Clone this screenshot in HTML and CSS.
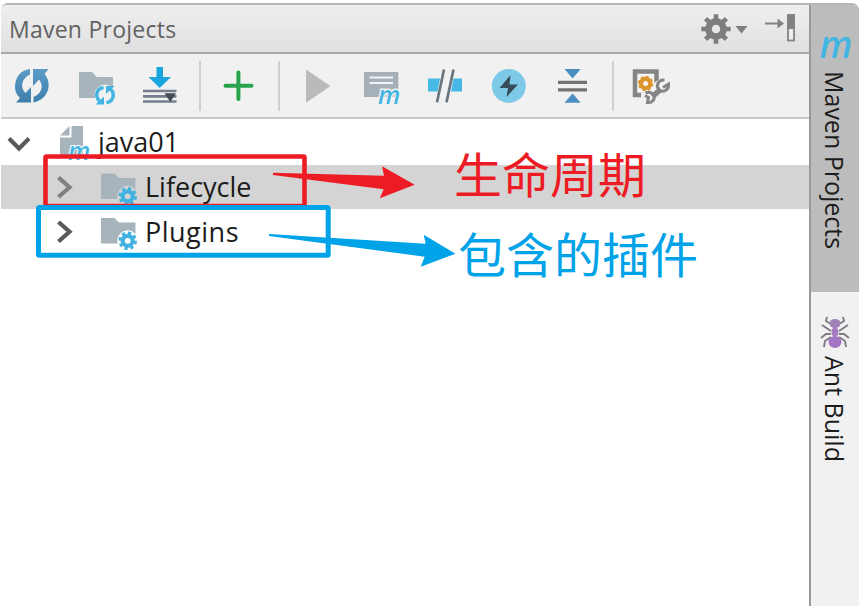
FILE: index.html
```html
<!DOCTYPE html>
<html lang="zh-CN">
<head>
<meta charset="utf-8">
<title>Maven Projects</title>
<link rel="stylesheet" href="styles.css">
</head>
<body>
<svg class="defs" width="0" height="0">
  <defs>
    <linearGradient id="steel" x1="0" y1="0" x2="0" y2="1"><stop offset="0" stop-color="#5b9bc6"/><stop offset="1" stop-color="#3f7fac"/></linearGradient>
    <g id="folder">
      <path d="M101 173.5H114.500L119 178H135.500V199H101Z" fill="#a8b4bc"/>
      <circle cx="127.700" cy="196.300" r="10.500" class="halo"/>
      <circle cx="127.700" cy="196.300" r="7.800" fill="none" stroke="#42b2e0" stroke-width="3" stroke-dasharray="3.300 2.826"/>
      <circle cx="127.700" cy="196.300" r="5" fill="none" stroke="#42b2e0" stroke-width="4.200"/>
    </g>
  </defs>
</svg>
<div class="window">
  <main class="panel">
    <header class="title-bar">
      <h1 class="title">Maven Projects</h1>
      <svg class="title-tools" viewBox="698 9 102 40" width="102" height="40">
        <circle cx="717" cy="29" r="7.500" fill="none" stroke="#7e7e7e" stroke-width="6.500"/>
        <path d="M717 14.300V19M717 39V43.700M702.300 29H707M727 29H731.700M706.600 18.600L710 22M724 36L727.400 39.400M727.400 18.600L724 22M710 36L706.600 39.400" stroke="#7e7e7e" stroke-width="4.600"/>
        <path d="M736.500 26H748.500L742.500 33.500Z" fill="#7e7e7e"/>
        <path d="M766 23.500H780" stroke="#828282" stroke-width="2"/>
        <path d="M778.500 18.500L785 23.500L778.500 28.500Z" fill="#828282"/>
        <rect x="789" y="15" width="6" height="25.500" fill="#efefef" stroke="#828282" stroke-width="1.800"/>
        <path d="M788.200 14.200H795.800V29H788.200Z" fill="#828282"/>
      </svg>
    </header>
    <div class="toolbar">
      <svg class="tool refresh" viewBox="12 66 40 40">
        <path d="M30 69C20 70 15 78 15 87C15 92 17 95 20 98L16 102.500H31V87L25.500 93C19.500 87 22 78 30 74.500Z" fill="url(#steel)"/>
        <path d="M33 69H48.500L44.500 74C52 82 50 99 33.500 102.500V97C42 94 44 85 39 79.500L33 86Z" fill="url(#steel)"/>
      </svg>
      <svg class="tool reimport" viewBox="78 66 40 40">
        <path d="M79 72H92L96.500 77H113V98H79Z" fill="#a8b4bc"/>
        <circle cx="105" cy="95" r="10.500" fill="#f1f1f1"/>
        <path d="M103.500 87.500C96.500 88.500 94.500 96 99.500 101M106.500 102.700C113.500 101.500 115.500 94 110.500 89" fill="none" stroke="#42b5e2" stroke-width="3.500"/>
        <path d="M95.500 104.500H104V96.500ZM106 86H114.500L106 94Z" fill="#42b5e2"/>
      </svg>
      <svg class="tool download" viewBox="140 66 40 40">
        <path d="M156.500 67H163V77H171L159.700 88L148.500 77H156.500Z" fill="#1ba5df"/>
        <path d="M143 91H176.500M143 96.300H176.500M143 101.500H176.500" stroke="#74818c" stroke-width="2.700"/>
        <path d="M164.500 93.200H176L170.300 102Z" fill="#444b51"/>
      </svg>
      <i class="divider after-download"></i>
      <svg class="tool add" viewBox="218 66 40 40"><path d="M238.400 72.500V99M225.500 85.700H251.500" stroke="#28a34b" stroke-width="4" stroke-linecap="round"/></svg>
      <i class="divider after-add"></i>
      <svg class="tool run" viewBox="298 66 40 40"><path d="M306 69.500L330.500 86L306 102.700Z" fill="#bababa"/></svg>
      <svg class="tool goal" viewBox="362 66 40 40">
        <path d="M364 72H398.300V97H364Z" fill="#a5b0b8"/>
        <path d="M369.500 77.500H393M369.500 83H393" stroke="#f4f4f4" stroke-width="2"/>
        <text x="378" y="104" class="m-mark toolbar-m">m</text>
      </svg>
      <svg class="tool offline" viewBox="425 66 40 40">
        <path d="M428 78.500H440L437.500 91.500H428ZM453.500 78.500H462V91.500H451Z" fill="#47b9e6"/>
        <path d="M444 69.500L437 102.300M453.500 69.500L446.500 102.300" stroke="#697681" stroke-width="2.700"/>
      </svg>
      <svg class="tool skip-tests" viewBox="489 66 40 40">
        <circle cx="508.800" cy="85.900" r="17" fill="#7dcae8"/>
        <path d="M510.500 75L499.500 88H508L506.500 97L518 84.500H509.500Z" fill="#354c5a"/>
      </svg>
      <svg class="tool collapse" viewBox="552 66 40 40">
        <path d="M564.500 69H580.700L572.600 78.500ZM564.500 102.700H580.700L572.600 93.500Z" fill="#4b8fc0"/>
        <path d="M558 82.300H587M558 89.800H587" stroke="#737373" stroke-width="3.200"/>
      </svg>
      <i class="divider after-collapse"></i>
      <svg class="tool settings" viewBox="631 66 40 40">
        <path d="M635 71.500H656.500V95H635Z" fill="#f5f5f5" stroke="#858585" stroke-width="4.500"/>
        <path d="M651 103L671 88L664 76L654 83L650 90L641 93V101Z" fill="#f1f1f1"/>
        <circle cx="645.600" cy="83.500" r="4.600" fill="none" stroke="#dc952d" stroke-width="4.200"/>
        <circle cx="645.600" cy="83.500" r="6.800" fill="none" stroke="#dc952d" stroke-width="1.800" stroke-dasharray="3 2.341"/>
        <path d="M652.500 96.500L660 90" stroke="#858585" stroke-width="5.500"/>
        <path d="M664.500 80C658 79.500 655.500 86 659 89.500C663 93.500 669 90 668.500 84L663 87.500M645 95.500L648.500 97.500L647.500 102.500C652.500 103 655.500 99 653.500 95.500C651.500 92 648 92 645.500 93" fill="none" stroke="#858585" stroke-width="3"/>
      </svg>
    </div>
    <div class="tree">
      <div class="row root">
        <svg class="row-icon" viewBox="1 119 96 46" width="96" height="46">
          <path d="M9 138.500L19 148.500L29 138.500" class="chevron"/>
          <path d="M71.500 126H83V156H60V137.500H71.500ZM69.500 126V135.500H60Z" fill="#a8b4bc"/>
          <text x="68" y="160" class="m-mark row-m">m</text>
        </svg>
        <span class="label">java01</span>
      </div>
      <div class="row selected">
        <svg class="row-icon" viewBox="1 165 143 44" width="143" height="44">
          <path d="M58.500 177.500L69.500 187.300L58.500 197" class="chevron muted"/><use href="#folder"/>
        </svg>
        <span class="label">Lifecycle</span>
      </div>
      <div class="row plugins">
        <svg class="row-icon" viewBox="1 164.500 143 44" width="143" height="44">
          <path d="M58.500 177.500L69.500 187.300L58.500 197" class="chevron"/><use href="#folder"/>
        </svg>
        <span class="label">Plugins</span>
      </div>
    </div>
  </main>
  <aside class="side-tabs">
    <div class="tab active">
      <svg class="tab-icon" viewBox="816 26 40 40" width="40" height="40"><text x="820.500" y="58" class="m-mark tab-m">m</text></svg>
      <span class="tab-label">Maven Projects</span>
    </div>
    <div class="tab">
      <svg class="tab-icon" viewBox="816 312 40 40" width="40" height="40">
        <path d="M832 324L827 321L828 317M840 324L845 321L844 317M832 331L823 325M840 331L849 325M832 334H827L822 338M840 334H845L850 338M832 337L826 341L825 347M840 337L846 341L847 347" fill="none" stroke="#807a82" stroke-width="1.900"/>
        <ellipse cx="836" cy="323.500" rx="5.500" ry="4.500" fill="#a080b5"/><ellipse cx="836" cy="332" rx="3.500" ry="5" fill="#a27cbc"/><ellipse cx="836" cy="342" rx="6.500" ry="6" fill="#a474c5"/>
      </svg>
      <span class="tab-label">Ant Build</span>
    </div>
  </aside>
</div>
<svg class="annotations" viewBox="0 0 859 606" width="859" height="606">
  <rect x="45.500" y="156.500" width="259" height="49.500" rx="1" fill="none" stroke="#ed1c24" stroke-width="4.600"/>
  <rect x="38.500" y="207.500" width="289.700" height="47.700" rx="1" fill="none" stroke="#00a2e8" stroke-width="5"/>
  <path d="M273 172.700L384 175.700L382 166.300L414.700 184.700L379.700 198.300L383.700 189.300L273 175Z" fill="#ed1c24"/>
  <path d="M269 234L425.700 243.700L423.700 234.700L455.500 253.700L420.700 266.700L424.700 256.700L269 236Z" fill="#00a2e8"/>
</svg>
<div class="note lifecycle-note">生命周期</div>
<div class="note plugins-note">包含的插件</div>
</body>
</html>
```
FILE: styles.css
```css
* { box-sizing: border-box; }
body {
  margin: 0;
  width: 859px;
  height: 606px;
  overflow: hidden;
  position: relative;
  background: #fff;
  color: #1c1c1c;
  font-family: "Open Sans", "Noto Sans", sans-serif;
}
svg { display: block; flex: none; overflow: visible; }
.defs { position: absolute; }
.window {
  display: flex;
  height: 603px;
  margin: 3px 0 0 1px;
  border-top: 2px solid #b5b5b5;
  border-radius: 7px 7px 0 0;
  overflow: hidden;
}
.panel { width: 808px; background: #fff; }
.title-bar {
  display: flex;
  align-items: center;
  justify-content: space-between;
  height: 49px;
  padding: 0 10px 0 8px;
  border-bottom: 2px solid #a8a8a8;
  background: linear-gradient(#efefef, #e0e0e0);
}
.title {
  margin: 0;
  font-size: 23px;
  font-weight: 400;
  line-height: 46px;
  letter-spacing: .25px;
  color: #626262;
}
.toolbar {
  display: flex;
  align-items: center;
  height: 65px;
  padding-left: 11px;
  border-bottom: 2px solid #c8c8c8;
  background: #f1f1f1;
}
.tool { width: 40px; height: 40px; }
.reimport { margin-left: 26px; }
.download { margin-left: 22px; }
.divider { width: 2px; height: 50px; background: #d0d0d0; flex: none; }
.after-download { margin-left: 19px; }
.add { margin-left: 17px; }
.after-add { margin-left: 20px; }
.run { margin-left: 18px; }
.goal, .skip-tests { margin-left: 24px; }
.offline, .collapse { margin-left: 23px; }
.after-collapse { margin-left: 20px; }
.settings { margin-left: 17px; }
.row { display: flex; height: 45px; --row-bg: #fff; }
.root { height: 46px; }
.selected { height: 44px; --row-bg: #d4d4d4; background: #d4d4d4; }
.label { padding-left: 1px; font-size: 27px; line-height: 43px; }
.root .label { line-height: 46px; }
.plugins .label { line-height: 45px; letter-spacing: .5px; }
.chevron { fill: none; stroke: #5a5a5a; stroke-width: 4.2px; }
.muted { stroke: #808080; }
.halo { fill: var(--row-bg); }
.m-mark {
  font-family: "Open Sans", sans-serif;
  font-style: italic;
  font-weight: 600;
  fill: #42b5e2;
}
.toolbar-m { font-size: 25px; stroke: #f1f1f1; stroke-width: 3px; paint-order: stroke; }
.row-m { font-size: 25px; stroke: #fff; stroke-width: 2px; paint-order: stroke; }
.tab-m { font-size: 37px; }
.side-tabs { width: 50px; background: #f1f1f1; border-left: 2px solid #999; }
.tab { display: flex; flex-direction: column; align-items: center; padding-top: 20px; }
.active { height: 287px; padding-top: 21px; background: #bcbcbc; }
.tab-label {
  writing-mode: vertical-rl;
  font-size: 25px;
  line-height: 36px;
  margin-top: 4px;
  white-space: nowrap;
}
.active .tab-label { margin-top: 5px; }
.annotations { position: absolute; left: 0; top: 0; }
.note {
  position: absolute;
  font-family: "Noto Sans CJK SC", sans-serif;
  font-size: 48px;
  line-height: 60px;
  white-space: nowrap;
}
.lifecycle-note { left: 454px; top: 142px; color: #ed1c24; }
.plugins-note { left: 458px; top: 222px; color: #00a2e8; }
```
